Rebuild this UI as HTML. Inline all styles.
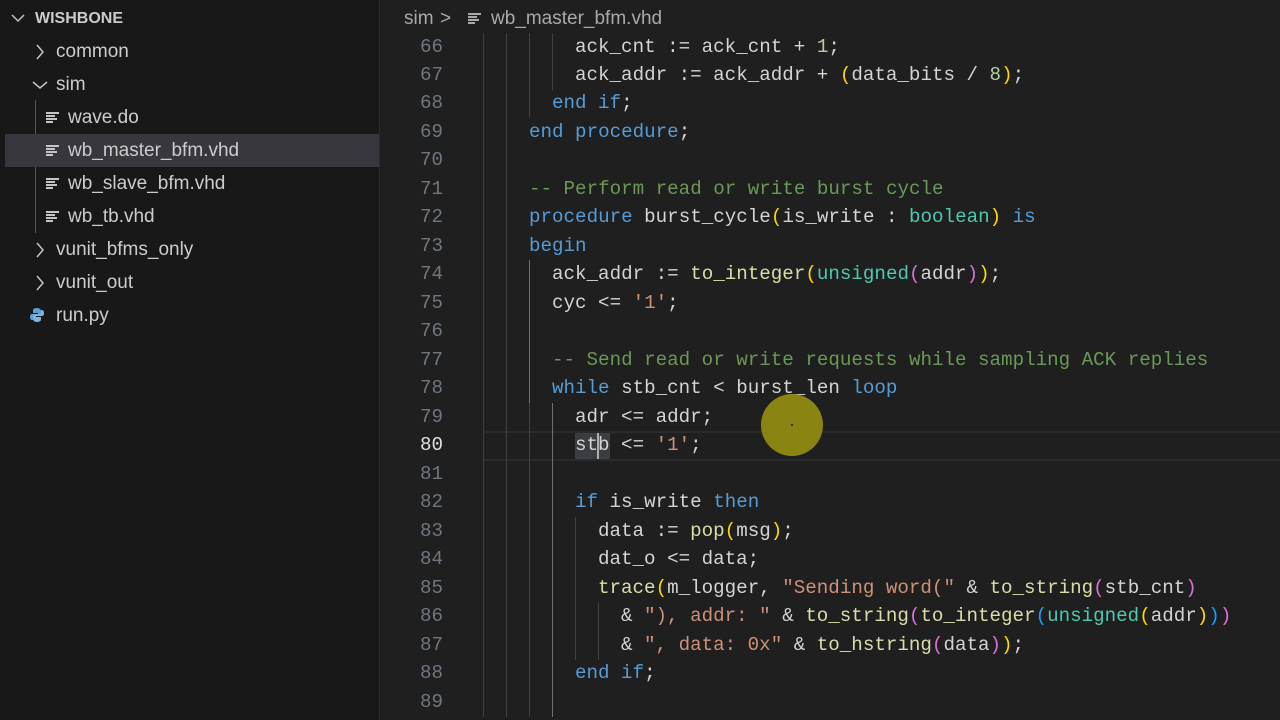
<!DOCTYPE html>
<html><head><meta charset="utf-8"><style>
*{margin:0;padding:0;box-sizing:border-box}
body{width:1280px;height:720px;overflow:hidden;background:#1f1f1f;font-family:"Liberation Sans",sans-serif;position:relative}
#side{position:absolute;left:0;top:0;width:380px;height:720px;background:#181818;border-right:1px solid #2b2b2b}
.it{position:absolute;left:0;width:379px;height:33px;line-height:33px;color:#cccccc;font-size:19px;white-space:nowrap}
.sel{background:#37373d;left:5px;width:374px}
.fi{position:absolute;top:11px;width:13px;height:11px}
.fi i{display:block;height:2px;background:#c5c5c5;margin-bottom:1px}
#bc{position:absolute;left:380px;top:0;width:900px;height:37px;line-height:37px;color:#a9a9a9;font-size:19px}
.ln{position:absolute;left:380px;width:63px;text-align:right;color:#6e7681;font:19.2px "Liberation Mono",monospace}
.cl{position:absolute;left:460px;white-space:pre;color:#d4d4d4;font:19.2px "Liberation Mono",monospace}
.g{position:absolute;width:1px;background:#404040}
.k{color:#569cd6}.c{color:#6a9955}.s{color:#ce9178}.f{color:#dcdcaa}.t{color:#4ec9b0}.n{color:#b5cea8}
.p1{color:#ffd700}.p2{color:#da70d6}.p3{color:#179fff}
</style></head><body>
<div id="side">
 <div class="it" style="top:2px"><svg style="position:absolute;left:11px;top:11px" width="14" height="10"><path d="M1 2 L7 8 L13 2" stroke="#c5c5c5" stroke-width="1.5" fill="none"/></svg><span style="position:absolute;left:35px;font-weight:bold;font-size:16px">WISHBONE</span></div>
 <div class="it" style="top:35px"><svg style="position:absolute;left:35px;top:9px" width="10" height="16"><path d="M2 1 L8 8 L2 15" stroke="#c5c5c5" stroke-width="1.5" fill="none"/></svg><span style="position:absolute;left:56px">common</span></div>
 <div class="it" style="top:68px"><svg style="position:absolute;left:32px;top:12px" width="16" height="10"><path d="M1 2 L8 8 L15 2" stroke="#c5c5c5" stroke-width="1.5" fill="none"/></svg><span style="position:absolute;left:56px">sim</span></div>
 <div style="position:absolute;left:35px;top:100px;width:1px;height:133px;background:#555"></div>
 <div class="it" style="top:101px"><div class="fi" style="left:46px"><i></i><i style="width:9px"></i><i style="width:11px"></i><i style="width:7px"></i></div><span style="position:absolute;left:68px">wave.do</span></div>
 <div class="it sel" style="top:134px"><div class="fi" style="left:41px"><i></i><i style="width:9px"></i><i style="width:11px"></i><i style="width:7px"></i></div><span style="position:absolute;left:63px">wb_master_bfm.vhd</span></div>
 <div class="it" style="top:167px"><div class="fi" style="left:46px"><i></i><i style="width:9px"></i><i style="width:11px"></i><i style="width:7px"></i></div><span style="position:absolute;left:68px">wb_slave_bfm.vhd</span></div>
 <div class="it" style="top:200px"><div class="fi" style="left:46px"><i></i><i style="width:9px"></i><i style="width:11px"></i><i style="width:7px"></i></div><span style="position:absolute;left:68px">wb_tb.vhd</span></div>
 <div class="it" style="top:233px"><svg style="position:absolute;left:35px;top:9px" width="10" height="16"><path d="M2 1 L8 8 L2 15" stroke="#c5c5c5" stroke-width="1.5" fill="none"/></svg><span style="position:absolute;left:56px">vunit_bfms_only</span></div>
 <div class="it" style="top:266px"><svg style="position:absolute;left:35px;top:9px" width="10" height="16"><path d="M2 1 L8 8 L2 15" stroke="#c5c5c5" stroke-width="1.5" fill="none"/></svg><span style="position:absolute;left:56px">vunit_out</span></div>
 <div class="it" style="top:299px"><svg style="position:absolute;left:29px;top:8px" width="16" height="16"><path d="M8 1 C4 1 4 3 4 4 V6 H9 V7 H3 C1 7 1 9 1 10 C1 12 2 13 3 13 H4 V11 C4 9 5 9 6 9 H10 C11 9 12 8 12 7 V4 C12 2 10 1 8 1Z" fill="#5a9fd4"/><path d="M8 15 C12 15 12 13 12 12 V10 H7 V9 H13 C15 9 15 7 15 6 C15 4 14 3 13 3 H12 V5 C12 7 11 7 10 7 H6 C5 7 4 8 4 9 V12 C4 14 6 15 8 15Z" fill="#7fb3db"/></svg><span style="position:absolute;left:56px">run.py</span></div>
</div>
<div id="bc"><span style="position:absolute;left:24px">sim</span><span style="position:absolute;left:60px">&gt;</span><div class="fi" style="left:88px;top:13px"><i style="background:#a9a9a9"></i><i style="width:9px;background:#a9a9a9"></i><i style="width:11px;background:#a9a9a9"></i><i style="width:7px;background:#a9a9a9"></i></div><span style="position:absolute;left:111px">wb_master_bfm.vhd</span></div>
<div style="position:absolute;left:483px;top:431px;width:797px;height:30px;border-top:2px solid #2a2a2a;border-bottom:2px solid #2a2a2a"></div>
<div style="position:absolute;left:575px;top:433px;width:35px;height:26px;background:#3a3d41"></div>
<div id="code"></div>
<div style="position:absolute;left:597px;top:433px;width:2px;height:26px;background:#aeafad"></div>
<div style="position:absolute;left:761px;top:394px;width:62px;height:62px;border-radius:50%;background:#8a8412"></div>
<div style="position:absolute;left:791px;top:424px;width:2px;height:2px;background:#333"></div>
<script>
var L=[
[66,10,'ack_cnt := ack_cnt + <span class="n">1</span>;',10],
[67,10,'ack_addr := ack_addr + <span class="p1">(</span>data_bits / <span class="n">8</span><span class="p1">)</span>;',10],
[68,8,'<span class="k">end if</span>;',8],
[69,6,'<span class="k">end procedure</span>;',6],
[70,6,'',6],
[71,6,'<span class="c">-- Perform read or write burst cycle</span>',6],
[72,6,'<span class="k">procedure</span> burst_cycle<span class="p1">(</span>is_write : <span class="t">boolean</span><span class="p1">)</span> <span class="k">is</span>',6],
[73,6,'<span class="k">begin</span>',6],
[74,8,'ack_addr := <span class="f">to_integer</span><span class="p1">(</span><span class="t">unsigned</span><span class="p2">(</span>addr<span class="p2">)</span><span class="p1">)</span>;',8],
[75,8,'cyc &lt;= <span class="s">\'1\'</span>;',8],
[76,8,'',8],
[77,8,'<span class="c">-- Send read or write requests while sampling ACK replies</span>',8],
[78,8,'<span class="k">while</span> stb_cnt &lt; burst_len <span class="k">loop</span>',8],
[79,10,'adr &lt;= addr;',10],
[80,10,'stb &lt;= <span class="s">\'1\'</span>;',10],
[81,10,'',10],
[82,10,'<span class="k">if</span> is_write <span class="k">then</span>',10],
[83,12,'data := <span class="f">pop</span><span class="p1">(</span>msg<span class="p1">)</span>;',12],
[84,12,'dat_o &lt;= data;',12],
[85,12,'<span class="f">trace</span><span class="p1">(</span>m_logger, <span class="s">"Sending word("</span> &amp; <span class="f">to_string</span><span class="p2">(</span>stb_cnt<span class="p2">)</span>',12],
[86,14,'&amp; <span class="s">"), addr: "</span> &amp; <span class="f">to_string</span><span class="p2">(</span><span class="f">to_integer</span><span class="p3">(</span><span class="t">unsigned</span><span class="p1">(</span>addr<span class="p1">)</span><span class="p3">)</span><span class="p2">)</span>',14],
[87,14,'&amp; <span class="s">", data: 0x"</span> &amp; <span class="f">to_hstring</span><span class="p2">(</span>data<span class="p2">)</span><span class="p1">)</span>;',14],
[88,10,'<span class="k">end if</span>;',10],
[89,10,'',10]];
var h='';
L.forEach(function(r){
 var top=32.5+(r[0]-66)*28.48;
 h+='<div class="ln" style="top:'+top+'px;line-height:28.5px;'+(r[0]==80?'color:#e0e0e0':'')+'">'+r[0]+'</div>';
 h+='<div class="cl" style="top:'+top+'px;line-height:28.5px;left:'+(460+r[1]*11.5)+'px">'+r[2]+'</div>';
 for(var c=2;c<=r[3]-2;c+=2){
  var act=(c==8&&r[0]>=79)||(c==6&&r[0]>=74&&r[0]<=78);
  h+='<div class="g" style="left:'+(460+c*11.5)+'px;top:'+top+'px;height:29px;'+(act?'background:#707070':'')+'"></div>';
 }
});
document.getElementById('code').innerHTML=h;
</script>
</body></html>
